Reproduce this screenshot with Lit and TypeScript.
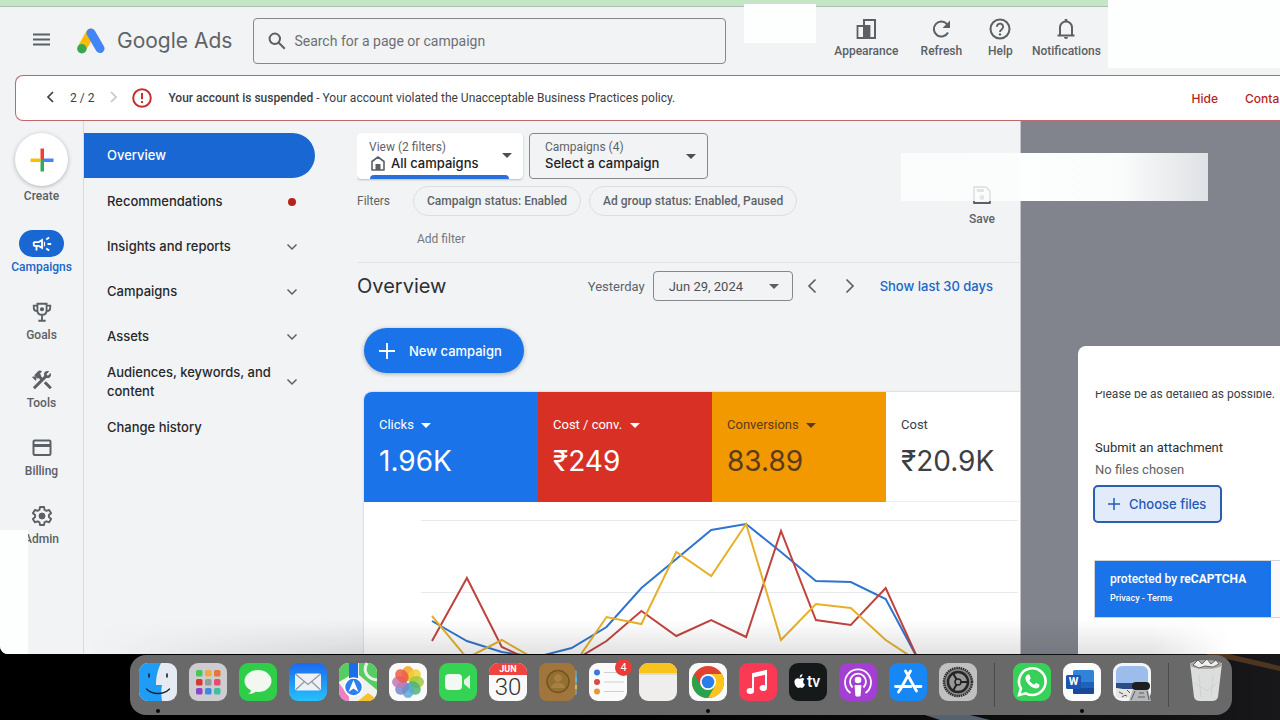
import { LitElement, html, css, svg, nothing } from "lit";
import type { TemplateResult } from "lit";
import { customElement, property } from "lit/decorators.js";
import { classMap } from "lit/directives/class-map.js";

const caret = html`<svg class="caret" viewBox="0 0 10 5" width="10" height="5" aria-hidden="true"><path d="M0 0h10L5 5z" fill="currentColor" /></svg>`;
const chevDown = html`<svg width="12" height="8" viewBox="0 0 12 8" fill="none" stroke="#5c6064" stroke-width="1.500"><path d="M1.500 1.500l4.500 4.500 4.500-4.500" /></svg>`;

const railIcons: Record<string, TemplateResult> = {
  Campaigns: html`<svg width="22" height="22" viewBox="0 0 24 24" fill="#fff"><path fill-rule="evenodd" d="M18 11v2h4v-2h-4zm-2 6.6c.96.71 2.21 1.65 3.2 2.4l1.2-1.6c-.99-.74-2.24-1.68-3.2-2.4l-1.2 1.6zM20.4 5.6L19.2 4c-.99.74-2.24 1.68-3.2 2.4l1.2 1.6c.96-.72 2.21-1.65 3.2-2.4zM4 9c-1.100 0-2 .9-2 2v2c0 1.100.9 2 2 2h1v4h2v-4h1l5 3V6L8 9H4zm5.030 1.710L11 9.530v4.940l-1.970-1.180-.48-.29H4v-2h4.550l.48-.29zM15.500 12c0-1.330-.58-2.530-1.500-3.350v6.690c.92-.81 1.500-2.010 1.500-3.340z" /></svg>`,
  Goals: html`<svg width="22" height="22" viewBox="0 0 24 24" fill="none" stroke="#5c6064" stroke-width="2"><path d="M7 3h10v7c0 3-2 5-5 5s-5-2-5-5zM7 5H3v2c0 2.500 1.500 4 4 4M17 5h4v2c0 2.500-1.500 4-4 4M12 15v6M8 21.500h8" /><circle cx="12" cy="9" r="1.300" fill="#5c6064" /></svg>`,
  Tools: html`<svg width="24" height="24" viewBox="0 0 24 24" fill="#5c6064"><path d="M13.780 15.300l6 6 2.110-2.160-6-6-2.110 2.160zm3.720-5.200c-.39 0-.81-.05-1.140-.19L4.970 21.250l-2.110-2.110 7.410-7.400L8.500 9.960l-.72.70-1.450-1.410v2.860l-.70.70-3.520-3.560.70-.70h2.810l-1.400-1.410 3.560-3.560a2.976 2.976 0 014.220 0L9.890 5.740l1.410 1.400-.71.71 1.790 1.780 1.820-1.880c-.14-.33-.2-.75-.2-1.120a3.490 3.490 0 013.500-3.520c.59 0 1.110.14 1.580.42L16.410 6.200l1.500 1.500 2.670-2.670c.28.47.42.97.42 1.600 0 1.920-1.550 3.470-3.500 3.470z" /></svg>`,
  Billing: html`<svg width="22" height="20" viewBox="0 0 22 20" fill="none" stroke="#5c6064" stroke-width="2"><rect x="2.500" y="2.500" width="17" height="14.500" rx="1.200" /><path d="M2 7.500h18" stroke-width="3" /></svg>`,
  Admin: html`<svg width="24" height="24" viewBox="0 0 24 24" fill="none" stroke="#5c6064" stroke-width="1.900"><path stroke-linejoin="round" d="M10 3h4l.5 2.800 1.900 1.100 2.700-1 2 3.400-2.200 1.800v2l2.200 1.800-2 3.400-2.700-1-1.900 1.100L14 21h-4l-.5-2.600-1.900-1.100-2.700 1-2-3.400 2.200-1.800v-2L2.900 9.300l2-3.400 2.700 1 1.900-1.100z" /><circle cx="12" cy="12" r="3" fill="#5c6064" stroke-width="1" /></svg>`,
};

const navItems = [
  { label: "Overview", active: true },
  { label: "Recommendations", dot: true },
  { label: "Insights and reports", expand: true },
  { label: "Campaigns", expand: true },
  { label: "Assets", expand: true },
  { label: "Audiences, keywords, and content", expand: true },
  { label: "Change history" },
];

const actions = [
  { label: "Appearance", wide: 80, icon: svg`<path d="M9 8V2h11v18H9" fill="none" stroke="#5c6064" stroke-width="2"/><path d="M2.500 8h12v12h-12z" fill="none" stroke="#5c6064" stroke-width="1.800"/><path d="M8 8h6.500v12H8z" fill="#5c6064"/>` },
  { label: "Refresh", wide: 70, icon: svg`<path d="M18 14.500A7.500 7.500 0 1 1 17.300 6.500" fill="none" stroke="#5c6064" stroke-width="2"/><path d="M20 2.500v7.500h-7.500z" fill="#5c6064"/>` },
  { label: "Help", wide: 48, icon: svg`<circle cx="11" cy="11" r="9.500" fill="none" stroke="#5c6064" stroke-width="2"/><path d="M7.900 8.800a3.100 3.100 0 1 1 5 2.400c-1.200.9-1.900 1.300-1.900 2.800" fill="none" stroke="#5c6064" stroke-width="1.900"/><circle cx="11" cy="16.400" r="1.200" fill="#5c6064"/>` },
  { label: "Notifications", wide: 84, icon: svg`<path d="M5 17V9.500a6 6 0 0 1 12 0V17M2.500 17.500h17" fill="none" stroke="#5c6064" stroke-width="2"/><path d="M9 19h4a2 2 0 0 1-4 0zM9.700 1h2.600v3H9.700z" fill="#5c6064"/>` },
];

const metrics = [
  { label: "Clicks", value: "1.96K", tone: "blue", pick: true },
  { label: "Cost / conv.", value: "₹249", tone: "red", pick: true },
  { label: "Conversions", value: "83.89", tone: "amber", pick: true },
  { label: "Cost", value: "₹20.9K", tone: "plain", pick: false },
];

const X0 = 68;
const STEP = 34.9;
const series = [
  { color: "#2f74cf", ys: [119, 139, 150, 155, 146, 125, 86, 57, 28, 22, 50, 79, 80, 97, 162] },
  { color: "#c0433d", ys: [139, 76, 145, 161, 160, 139, 109, 134, 118, 135, 29, 118, 123, 86, 163] },
  { color: "#e6b02a", ys: [114, 156, 138, 158, 166, 115, 122, 50, 74, 22, 138, 102, 106, 138, 161] },
];

@customElement("perf-chart")
class PerfChart extends LitElement {
  static styles = css`
    :host { display: block; background: #fff; }
    .plot { display: block; width: 100%; height: 152px; }
    .grid { stroke: #e8eaed; }
    .line { fill: none; stroke-width: 2; vector-effect: non-scaling-stroke; }
  `;
  render() {
    return html`<svg class="plot" viewBox="0 0 656 152" preserveAspectRatio="none" role="img" aria-label="Performance over time">
      <path class="grid" d="M57 18.500H654M57 90.500H654" />
      ${series.map((s) => svg`<polyline class="line" stroke=${s.color} points=${s.ys.map((y, i) => `${(X0 + i * STEP).toFixed(1)},${y}`).join(" ")} />`)}
    </svg>`;
  }
}

const petals = ["#f5a623", "#f0d030", "#9fca3c", "#4fb56c", "#5aa9d6", "#7a86c8", "#c07ab4", "#ee5a44"];
const pads = ["#49c552", "#f2a93b", "#e8743b", "#d8362f", "#8f9f95", "#e34f6f", "#8e44c9", "#3a8be0", "#3fbf9f"];

const tile = (fill: string) => svg`<rect width="38" height="38" rx="9" fill=${fill} />`;

const dockIcons: Record<string, unknown> = {
  Finder: svg`${tile("#e6eaf2")}<path d="M9 0h13c-3 6-5 13-5 22h6c-1 5-1 10 0 16H9a9 9 0 0 1-9-9V9a9 9 0 0 1 9-9z" fill="#1f9cf5"/><path d="M10 11v3M28 11v3" stroke="#123" stroke-width="1.600" stroke-linecap="round"/><path d="M7.500 26c6 6 17 6 23 0" fill="none" stroke="#123" stroke-width="1.300" stroke-linecap="round"/>`,
  Launchpad: svg`${tile("#cdcdd1")}${pads.map((c, i) => svg`<rect x=${7 + (i % 3) * 9} y=${7 + Math.floor(i / 3) * 9} width="6.500" height="6.500" rx="1.600" fill=${c} />`)}`,
  Messages: svg`${tile("#2fce48")}<ellipse cx="19" cy="18" rx="13.500" ry="11" fill="#f2f7f0"/><path d="M12 26c0 3-1 4-3 5 4 0 7-1 8-3z" fill="#f2f7f0"/>`,
  Mail: svg`<defs><linearGradient id="m" x2="0" y2="1"><stop stop-color="#1b6af0"/><stop offset="1" stop-color="#27c1fb"/></linearGradient></defs>${tile("url(#m)")}<rect x="6" y="10.500" width="26" height="17" rx="2" fill="#eef1f4"/><path d="M7 11.500l12 10 12-10M7 26.500l8.500-8M31 26.500l-8.500-8" fill="none" stroke="#8e98a3" stroke-width="1.200"/>`,
  Maps: svg`${tile("#f1f2f0")}<path d="M0 9a9 9 0 0 1 9-9h1v13L0 19zM20 0h9a9 9 0 0 1 9 9v18L20 12z" fill="#58cb62"/><path d="M28 0c-5 9 1 16 10 17" fill="none" stroke="#e7f2e6" stroke-width="3"/><path d="M0 20l10 14v4H9a9 9 0 0 1-9-9z" fill="#ee7fc0"/><path d="M19 38l10-8 7 5-5 3z" fill="#f6c12c"/><path d="M10 0h9v16h-9z" fill="#1c6ee8"/><circle cx="14.500" cy="24" r="9" fill="#2d7ff0" stroke="#fff" stroke-width="1.500"/><path d="M14.500 17l5 12-5-3.500-5 3.500z" fill="#fff"/>`,
  Photos: svg`${tile("#fafafa")}${petals.map((c, i) => svg`<ellipse cx="19" cy="10.500" rx="6" ry="7.500" fill=${c} opacity=".85" transform=${`rotate(${i * 45} 19 19)`} />`)}`,
  FaceTime: svg`${tile("#35d353")}<rect x="6" y="11" width="17" height="16" rx="4" fill="#f4f8f2"/><path d="M25 17l6-5v14l-6-5z" fill="#e4f2e2"/>`,
  Contacts: svg`<rect x="30" y="7" width="8" height="25" rx="2" fill="#6f9aa3"/><path d="M36 14h2v5h-2z" fill="#57b6e6"/><path d="M36 22h2v4h-2z" fill="#e5b637"/><rect width="36" height="38" rx="8" fill="#a0763c"/><circle cx="19" cy="18.500" r="11" fill="#94702f" stroke="#755324" stroke-width="1.500"/><circle cx="19" cy="15" r="3.800" fill="#a87f45"/><path d="M12 25c1-7 13-7 14 0z" fill="#a87f45"/>`,
  Reminders: svg`${tile("#fafafa")}<path d="M15 9.500h16M15 19h20M15 28.500h20" stroke="#ced0d3"/><circle cx="8" cy="9.500" r="3" fill="#3779dc"/><circle cx="8" cy="19" r="3" fill="#d94a45"/><circle cx="8" cy="28.500" r="3" fill="#ea9636"/>`,
  Notes: svg`${tile("#efeeec")}<path d="M0 10V9a9 9 0 0 1 9-9h20a9 9 0 0 1 9 9v1z" fill="#f8c31c"/><path d="M0 11h38" stroke="#c9c5b8"/>`,
  Chrome: svg`${tile("#fafafa")}<circle cx="19" cy="19" r="16" fill="#e04131"/><path d="M5.140 11A16 16 0 0 0 19 35l7-12-14 0z" fill="#2ba24c"/><path d="M19 35A16 16 0 0 0 32.860 11H19l7 12z" fill="#fbc51d"/><circle cx="19" cy="19" r="8" fill="#fff"/><circle cx="19" cy="19" r="6.300" fill="#2b7de9"/>`,
  Music: svg`${tile("#fa3a55")}<path d="M14 27V11l13-3v16" fill="none" stroke="#fff" stroke-width="2"/><path d="M14 10.500l13-3v4l-13 3z" fill="#fff"/><ellipse cx="11.300" cy="28" rx="3.700" ry="3" fill="#fff"/><ellipse cx="24.300" cy="25" rx="3.700" ry="3" fill="#fff"/>`,
  TV: svg`${tile("#15191a")}<path d="M11.500 15.500c1.500-1 3-.6 4 .4-2 1.400-1.600 4.600.5 5.400-.7 2-2 4-3.400 3.600-1-.4-1.500-.4-2.600 0C7.700 25.500 5 21 5.500 18c.4-2.400 2.800-3.500 4.500-2.500.6.300.9.300 1.500 0zM10.700 14.500c0-2 1-3.200 2.800-3.500 0 2-1 3.300-2.800 3.500z" fill="#fff"/>`,
  Podcasts: svg`${tile("#a43fd3")}<g fill="none" stroke="#fff" stroke-width="1.800"><path d="M11.500 30a13 13 0 1 1 15 0"/><path d="M13.500 24.500a8 8 0 1 1 11 0"/></g><circle cx="19" cy="17" r="3.300" fill="#fff"/><path d="M16 22.500h6l-1 10.500h-4z" fill="#fff" stroke="#fff" stroke-linejoin="round"/>`,
  "App Store": svg`${tile("#1787f5")}<path d="M21.500 8L11 27M16.500 8l11 20M6.500 23.500H22M27 23.500h5M9.500 29l1.200-2" fill="none" stroke="#fff" stroke-width="2.800" stroke-linecap="round"/>`,
  Settings: svg`${tile("#c0c0c0")}<circle cx="19" cy="19" r="14" fill="#8b8b8b" stroke="#2d2d2d" stroke-width="2.500" stroke-dasharray="1.500 .7"/><circle cx="19" cy="19" r="10" fill="#999" stroke="#262626" stroke-width="2.500"/><path d="M19 19h10M19 19l-5-8.700M19 19l-5 8.700" stroke="#222" stroke-width="2"/><circle cx="19" cy="19" r="3" fill="#999" stroke="#222" stroke-width="1.500"/>`,
  WhatsApp: svg`${tile("#37d058")}<path d="M6 32l1.900-6.500a13.300 13.300 0 1 1 5 4.800z" fill="none" stroke="#fff" stroke-width="2.600"/><path d="M14 12c1-1 2-1 2.500 0l1.200 3c.2.700-1.300 2-1.300 2.300 1 2 2.500 3.500 4.600 4.400.5 0 1.700-1.700 2.300-1.600l3 1.500c.5.400 0 2.800-1.300 3.400-5 2.500-13.500-6-12.500-10.700.2-1 .8-1.800 1.500-2.300z" fill="#fff"/>`,
  Word: svg`${tile("#fcfcfd")}<rect x="10" y="7" width="21" height="24" rx="1.500" fill="#2f84d8"/><path d="M10 19h21v6H10z" fill="#1f62bd"/><path d="M10 25h21v4.500a1.500 1.500 0 0 1-1.500 1.500h-18a1.500 1.500 0 0 1-1.500-1.500z" fill="#174a9c"/><rect x="3" y="12" width="15" height="14" rx="1.500" fill="#1d54b0"/>`,
  Preview: svg`${tile("#f3f4f6")}<path d="M3 9a6 6 0 0 1 6-6h20a6 6 0 0 1 6 6v13H3z" fill="#9cbcec"/><path d="M3 20h32v5L24 28 3 25z" fill="#2d4c83"/><path d="M3 26h32v9H6a3 3 0 0 1-3-3z" fill="#e7e6e0"/><path d="M6 29l4 2M9 34q3-3 5-1M14 27l3 3" stroke="#555" fill="none"/><path d="M20 26h15l3 12H16z" fill="#b4b8b9"/><path d="M22 28l-4 9M34 28l2 9M26 30h5M25 34h7" stroke="#5b5f60" fill="none"/><rect x="19" y="19" width="18" height="8" rx="4" fill="#1c1e20"/>`,
  Trash: svg`<path d="M3 0h32l-4 34q-1 4-6 4H13q-5 0-6-4z" fill="#dcdddd"/><ellipse cx="19" cy="1.500" rx="16" ry="4.500" fill="#a8a8a6"/><path d="M6 2l5-5 4 4 5-5 4 5 5-4 3 4-6 3-8-1-6 2z" fill="#efefee" stroke="#4c4a48" stroke-width=".8"/><path d="M12 12l2 22M26 12l-2 22M8 20l12 8 10-8" stroke="#d0d1d1" fill="none"/>`,
};

const dockApps = ["Finder", "Launchpad", "Messages", "Mail", "Maps", "Photos", "FaceTime", "Calendar", "Contacts", "Reminders", "Notes", "Chrome", "Music", "TV", "Podcasts", "App Store", "Settings", "|", "WhatsApp", "Word", "Preview", "|", "Trash"];
const running = new Set(["Finder", "Chrome", "Word"]);

@customElement("dock-app")
class DockApp extends LitElement {
  @property() name = "";
  static styles = css`
    :host { display: block; width: 50px; }
    .app { position: relative; display: flex; justify-content: center; width: 100%; height: 60px; padding: 8px 0 0; border: 0; background: none; font-family: Roboto, sans-serif; }
    .art { display: block; width: 38px; height: 38px; overflow: visible; }
    .run { position: absolute; left: 23px; bottom: 2px; width: 4px; height: 4px; border-radius: 2px; background: #060606; }
    .cal { width: 38px; height: 38px; border-radius: 9px; overflow: hidden; background: #fafafa; color: #333; text-align: center; }
    .month { display: block; height: 12px; line-height: 13px; font-size: 9px; font-weight: 700; background: #ee4440; color: #fff; }
    .day { display: block; font-size: 24px; line-height: 25px; font-weight: 300; }
    .badge { position: absolute; right: 1px; top: 4px; width: 17px; height: 17px; border-radius: 9px; background: #ec3a35; color: #fff; font-size: 11px; line-height: 17px; }
    .over { position: absolute; color: #fff; }
    .tv { left: 24px; top: 17px; font-size: 16px; line-height: 20px; font-weight: 500; }
    .w { left: 9px; top: 20px; width: 15px; font-size: 11px; line-height: 14px; font-weight: 700; }
  `;
  render() {
    const n = this.name;
    return html`<button class="app" aria-label=${n}>
      ${n === "Calendar"
        ? html`<span class="cal"><span class="month">JUN</span><span class="day">30</span></span>`
        : html`<svg class="art" viewBox="0 0 38 38" aria-hidden="true">${dockIcons[n]}</svg>`}
      ${n === "TV" ? html`<span class="over tv">tv</span>` : nothing}
      ${n === "Word" ? html`<span class="over w">W</span>` : nothing}
      ${n === "Reminders" ? html`<span class="badge">4</span>` : nothing}
      ${running.has(n) ? html`<span class="run"></span>` : nothing}
    </button>`;
  }
}

@customElement("app-root")
class AppRoot extends LitElement {
  static styles = css`
    :host { display: flex; flex-direction: column; height: 100vh; overflow: hidden; background: #030303; color: #3c4043; font-family: Roboto, sans-serif; font-size: 12px; --head: Inter, sans-serif; }
    * { box-sizing: border-box; }
    button, select, input { font: inherit; color: inherit; margin: 0; }
    button { border: 0; background: none; padding: 0; white-space: nowrap; }
    select { appearance: none; border: 0; background: none; padding: 0; outline: 0; }
    a { text-decoration: none; color: inherit; }
    svg { flex: none; }

    .window { position: relative; flex: 1; min-height: 0; display: flex; flex-direction: column; overflow: hidden; border-bottom-left-radius: 8px; background: #f1f3f4; }
    .tabs { flex: none; height: 7px; background: #c3e6c4; border-bottom: 1px solid #b4bcb6; }
    .mask { position: absolute; background: #fdfefe; }
    .mask-tab { left: 744px; top: 4px; width: 72px; height: 39px; }
    .mask-user { left: 1108px; right: 0; top: 0; height: 68px; }
    .mask-side { left: 0; top: 530px; width: 28px; bottom: 0; }
    .mask-band { left: 901px; top: 153px; width: 307px; height: 48px; background: linear-gradient(90deg, rgba(253, 254, 254, .8), rgba(253, 254, 254, .85) 38%, #fdfefe 39%, #fafbfb 72%, #dfe2e4); }
    .shade { position: absolute; left: 0; right: 0; bottom: 0; height: 34px; pointer-events: none; background: linear-gradient(transparent, rgba(60, 60, 66, .15)); mask-image: linear-gradient(90deg, transparent 7%, #000 28%, #000 90%, transparent 96%); }

    .header { flex: none; display: flex; align-items: center; height: 68px; padding-left: 33px; }
    .brand { display: flex; align-items: center; gap: 12px; margin-left: 27px; color: #5f6368; font-family: var(--head); font-size: 21px; line-height: 28px; }
    .search { display: flex; align-items: center; gap: 8px; width: 473px; height: 46px; margin-left: 21px; padding: 0 14px; border: 1px solid #85898d; border-radius: 4px; font-size: 14px; }
    .search input { flex: 1; border: 0; background: none; outline: 0; padding: 0; }
    .search input::placeholder { color: #6c7074; opacity: 1; }
    .actions { display: flex; margin-left: 100px; }
    .action { display: flex; flex-direction: column; align-items: center; gap: 3px; padding-bottom: 5px; line-height: 16px; font-weight: 500; color: #5c6064; }

    .banner { flex: none; display: flex; align-items: center; height: 46px; margin-left: 15px; padding-left: 30px; border: 1px solid #c0676a; border-right: 0; border-radius: 8px 0 0 8px; background: #fff; white-space: nowrap; overflow: hidden; }
    .banner p { margin: 0 0 0 16px; flex: 1; }
    .banner b { font-weight: 500; }
    .pager { margin: 0 16px; }
    .warn { margin-left: 14px; }
    .danger { color: #b3261e; font-family: var(--head); font-weight: 500; }
    .danger + .danger { width: 35px; margin-left: 27px; }

    .body { flex: 1; min-height: 0; display: grid; grid-template-columns: 84px 273px minmax(0, 1fr) 260px; }
    .rail { display: flex; flex-direction: column; align-items: center; gap: 23px; padding-top: 12px; border-right: 1px solid #d8dade; }
    .tool { display: flex; flex-direction: column; align-items: center; gap: 2px; line-height: 16px; font-weight: 500; color: #5c6064; }
    .glyph { display: flex; align-items: center; justify-content: center; width: 45px; height: 27px; border-radius: 14px; }
    .tool.on { color: #1a66c9; }
    .tool.on .glyph { background: #1967d2; }
    .fab { display: flex; align-items: center; justify-content: center; width: 53px; height: 53px; border-radius: 27px; background: #fff; box-shadow: 0 1px 4px rgba(60, 64, 67, .35); }
    .create { margin-bottom: 3px; }

    .nav { display: flex; flex-direction: column; padding: 12px 42px 0 0; font-family: var(--head); font-size: 13px; line-height: 19px; font-weight: 500; color: #26282b; }
    .nav a { display: flex; align-items: center; justify-content: space-between; min-height: 45px; padding: 4px 17px 4px 23px; }
    .nav span { flex: 1; }
    .nav .on { margin-bottom: 1px; background: #1967d2; color: #fff; border-radius: 0 23px 23px 0; }
    .dot { width: 8px; height: 8px; border-radius: 4px; background: #b9201c; margin-right: 2px; }

    .main { min-width: 0; padding-top: 12px; overflow: hidden; }
    .scopes { display: flex; gap: 6px; }
    .scope { position: relative; display: flex; flex-direction: column; justify-content: center; height: 46px; padding: 0 12px 2px; border-radius: 4px; color: #5f6368; line-height: 16px; }
    .scope select { font-family: var(--head); font-size: 13px; font-weight: 500; color: #202124; width: 100%; height: 17px; padding-right: 24px; }
    .scope .caret { position: absolute; right: 11px; top: 20px; color: #4c5054; }
    .scope.view { width: 166px; background: #fff; box-shadow: 0 1px 2px rgba(60, 64, 67, .3); }
    .scope.view::after { content: ""; position: absolute; left: 13px; right: 14px; bottom: 0; height: 4px; border-radius: 4px 4px 0 0; background: #2a6fdb; }
    .scope.camp { width: 179px; padding: 0 15px 2px; border: 1px solid #85898d; }
    .home { display: flex; align-items: center; gap: 6px; padding-left: 2px; }

    .filters { display: flex; padding: 7px 0 15px; border-bottom: 1px solid #e1e3e6; color: #5f6368; }
    .filters > h2 { margin: 0; width: 56px; font-size: 12px; font-weight: 400; line-height: 30px; }
    .chips { flex: 1; display: flex; flex-wrap: wrap; align-content: flex-start; gap: 8px; }
    .chip { height: 30px; padding: 0 13px; border: 1px solid #dcdee1; border-radius: 15px; font-weight: 500; }
    .add { display: block; width: 100%; padding: 7px 0 0 4px; text-align: left; line-height: 16px; color: #74787c; }
    .save { display: flex; flex-direction: column; align-items: center; gap: 7px; width: 76px; padding-bottom: 20px; line-height: 16px; font-weight: 500; }

    .range { display: flex; align-items: center; height: 46px; padding-right: 27px; font-size: 13px; color: #5f6368; }
    .range h1 { flex: 1; margin: 0; font-family: var(--head); font-size: 20px; font-weight: 400; color: #2d3033; }
    .date { position: relative; width: 140px; height: 30px; margin: 0 0 0 8px; }
    .date select { width: 100%; height: 100%; padding-left: 15px; border: 1px solid #85898d; border-radius: 4px; color: #4c5054; }
    .date .caret { position: absolute; right: 14px; top: 13px; color: #5c6064; }
    .step { display: flex; align-items: center; justify-content: center; width: 38px; height: 38px; }
    .range a { margin-left: 11px; font-family: var(--head); font-weight: 500; color: #1a66c9; white-space: nowrap; }

    .content { padding: 19px 0 0 7px; }
    .new { display: flex; align-items: center; gap: 14px; height: 45px; padding: 0 22px 0 15px; margin-bottom: 19px; border-radius: 23px; background: #1a73e8; color: #fff; font-family: var(--head); font-size: 13px; font-weight: 500; box-shadow: 0 1px 4px rgba(60, 64, 67, .4); }
    .card { border-radius: 8px 0 0 0; overflow: hidden; background: #fff; box-shadow: 0 0 2px rgba(60, 64, 67, .35); }
    .metrics { display: grid; grid-template-columns: repeat(3, 174px) minmax(0, 1fr); }
    .metric { height: 110px; padding: 23px 15px 0; font-size: 13px; line-height: 20px; white-space: nowrap; }
    .metric .pick { display: flex; align-items: center; gap: 7px; height: 20px; }
    .metric strong { display: block; margin-top: 7px; font-family: var(--head); font-size: 28px; line-height: 38px; font-weight: 400; }
    .blue { background: #1a73e8; color: #fff; }
    .red { background: #d93025; color: #fff; }
    .amber { background: #f29900; color: #5a3b1d; }
    .plain { color: #3c4043; border-bottom: 1px solid #eceef0; }

    .scrim { min-width: 0; padding: 225px 0 0 57px; border-left: 1px solid #c4c6cb; background: #81848c; }
    .form { height: 100%; padding: 40px 0 0 17px; border-radius: 8px 0 0 0; background: #fff; overflow: hidden; white-space: nowrap; }
    .hint { position: relative; margin: 0 0 35px; line-height: 16px; }
    .hint::before { content: ""; position: absolute; left: 0; right: 0; top: 0; height: 5px; background: #fff; }
    .form h3 { margin: 0; font-size: 13px; line-height: 22px; font-weight: 400; color: #2d3033; }
    .form .none { margin: 0 0 4px; font-size: 13px; line-height: 22px; color: #5f6368; }
    .choose { display: flex; align-items: center; gap: 9px; height: 38px; margin-left: -2px; padding: 0 14px 0 13px; border: 2px solid #2a5fb0; border-radius: 5px; background: #e2ebfa; color: #2459b5; font-family: var(--head); font-size: 13px; font-weight: 500; }
    .captcha { height: 58px; margin: 37px 0 0 -1px; border: 1px solid #d3d3d3; border-right: 0; background: #f9f9f9; }
    .captcha div { width: 176px; height: 100%; padding: 9px 15px; background: #1a73e8; color: #fff; font-weight: 500; line-height: 19px; }
    .captcha small { display: block; font-size: 9px; }
    .captcha b { font-weight: 700; }

    .desk { position: relative; flex: none; height: 66px; padding: 1px 0 0 130px; background: linear-gradient(90deg, #000 40%, #111113 90%, #18181a); }
    .wall { position: absolute; left: 0; top: 0; width: 100%; height: 100%; }
    .dock { position: relative; display: flex; width: max-content; height: 60px; padding: 0 1px 0 3px; border-radius: 16px; background: #69696a; }
    .sep { width: 1px; height: 44px; margin: 8px 12px 0 11px; background: #4b4b4c; }
  `;

  render() {
    return html`
      <div class="window">
        <div class="tabs"></div>
        <header class="header">
          <button aria-label="Main menu"><svg width="17" height="13" viewBox="0 0 17 13" stroke="#5c6064" stroke-width="1.800"><path d="M0 1.500h17M0 6.500h17M0 11.500h17" /></svg></button>
          <div class="brand">
            <svg width="28" height="26" viewBox="0 0 28 26" fill="none" stroke-linecap="round"><path d="M13.500 5L4.800 20.500" stroke="#fbbc04" stroke-width="9" /><path d="M14 5l9 15.500" stroke="#4285f4" stroke-width="9" /><circle cx="4.900" cy="20.800" r="4.700" fill="#34a853" /></svg>
            <span>Google Ads</span>
          </div>
          <label class="search">
            <svg width="18" height="18" viewBox="0 0 18 18" fill="none" stroke="#5c6064" stroke-width="2"><circle cx="6.800" cy="6.800" r="5.200" /><path d="M10.500 10.500l6.300 6.300" /></svg>
            <input type="text" aria-label="Search" placeholder="Search for a page or campaign" />
          </label>
          <nav class="actions">
            ${actions.map((a) => html`<button class="action" style="width:${a.wide}px"><svg width="22" height="22" viewBox="0 0 22 22">${a.icon}</svg>${a.label}</button>`)}
          </nav>
        </header>

        <section class="banner">
          <button aria-label="Previous"><svg width="8" height="12" viewBox="0 0 8 12" fill="none" stroke="#3c4043" stroke-width="1.700"><path d="M7 1L2 6l5 5" /></svg></button>
          <span class="pager">2 / 2</span>
          <button aria-label="Next"><svg width="8" height="12" viewBox="0 0 8 12" fill="none" stroke="#c4c7ca" stroke-width="1.700"><path d="M1 1l5 5-5 5" /></svg></button>
          <svg class="warn" width="20" height="20" viewBox="0 0 20 20" fill="none" stroke="#c5302b" stroke-width="2"><circle cx="10" cy="10" r="8.800" /><path d="M10 5v6.200M10 13v2" /></svg>
          <p><b>Your account is suspended</b> - Your account violated the Unacceptable Business Practices policy.</p>
          <button class="danger">Hide</button>
          <a class="danger" href="#">Conta</a>
        </section>

        <div class="body">
          <nav class="rail">
            <button class="tool create">
              <span class="fab"><svg width="24" height="24" viewBox="0 0 24 24"><path d="M10.500 0.500h3.500v12h-3.500z" fill="#ea4335" /><path d="M10.500 12h3.500v11.500h-3.500z" fill="#34a853" /><path d="M.5 10.500h10v3.500H.5z" fill="#fbbc04" /><path d="M14 10.500h9.500v3.500H12z" fill="#4285f4" /></svg></span>Create
            </button>
            ${Object.keys(railIcons).map((k) => html`<button class=${classMap({ tool: true, on: k === "Campaigns" })}><span class="glyph">${railIcons[k]}</span>${k}</button>`)}
          </nav>

          <nav class="nav">
            ${navItems.map((n) => html`<a href="#" class=${classMap({ on: !!n.active })}><span>${n.label}</span>${n.dot ? html`<i class="dot"></i>` : nothing}${n.expand ? chevDown : nothing}</a>`)}
          </nav>

          <main class="main">
            <div class="scopes">
              <div class="scope view">
                <label for="view">View (2 filters)</label>
                <div class="home">
                  <svg width="14" height="15" viewBox="0 0 14 15" fill="none" stroke="#5c6064" stroke-width="1.600"><path d="M1 5.500L7 1l6 4.500V14H1z" stroke-linejoin="round" /><path d="M4.500 8h5v6h-5z" fill="#5c6064" stroke="none" /></svg>
                  <select id="view"><option>All campaigns</option></select>
                </div>
                ${caret}
              </div>
              <div class="scope camp">
                <label for="camp">Campaigns (4)</label>
                <select id="camp"><option>Select a campaign</option></select>
                ${caret}
              </div>
            </div>
            <div class="filters">
              <h2>Filters</h2>
              <div class="chips">
                <button class="chip">Campaign status: Enabled</button>
                <button class="chip">Ad group status: Enabled, Paused</button>
                <button class="add">Add filter</button>
              </div>
              <button class="save"><svg width="18" height="18" viewBox="0 0 18 18" fill="none" stroke="#5c6064" stroke-width="1.800"><path d="M1 1h12l4 4v12H1z" stroke-linejoin="round" /><path d="M4 4.500h7" stroke-width="3" /><circle cx="9" cy="11.500" r="2.400" fill="#5c6064" stroke="none" /></svg>Save</button>
            </div>
            <div class="range">
              <h1>Overview</h1>
              <label for="date">Yesterday</label>
              <div class="date"><select id="date"><option>Jun 29, 2024</option></select>${caret}</div>
              <button class="step" aria-label="Previous day"><svg width="10" height="16" viewBox="0 0 10 16" fill="none" stroke="#5c6064" stroke-width="1.700"><path d="M8.500 1.500L2 8l6.500 6.500" /></svg></button>
              <button class="step" aria-label="Next day"><svg width="10" height="16" viewBox="0 0 10 16" fill="none" stroke="#5c6064" stroke-width="1.700"><path d="M1.500 1.500L8 8l-6.500 6.500" /></svg></button>
              <a href="#">Show last 30 days</a>
            </div>
            <div class="content">
              <button class="new"><svg width="16" height="16" viewBox="0 0 16 16" stroke="#fff" stroke-width="1.800"><path d="M8 0v16M0 8h16" /></svg>New campaign</button>
              <div class="card">
                <div class="metrics">
                  ${metrics.map((m) => html`<div class="metric ${m.tone}">
                    ${m.pick ? html`<div class="pick"><select aria-label="Metric"><option>${m.label}</option></select>${caret}</div>` : html`<div class="pick">${m.label}</div>`}
                    <strong>${m.value}</strong>
                  </div>`)}
                </div>
                <perf-chart></perf-chart>
              </div>
            </div>
          </main>

          <aside class="scrim">
            <div class="form">
              <p class="hint">Please be as detailed as possible.</p>
              <h3>Submit an attachment</h3>
              <p class="none">No files chosen</p>
              <button class="choose"><svg width="12" height="12" viewBox="0 0 12 12" stroke="#2459b5" stroke-width="1.500"><path d="M6 0v12M0 6h12" /></svg>Choose files</button>
              <div class="captcha"><div>protected by <b>reCAPTCHA</b><small><a href="#">Privacy</a> - <a href="#">Terms</a></small></div></div>
            </div>
          </aside>
        </div>

        <div class="mask mask-tab"></div>
        <div class="mask mask-user"></div>
        <div class="mask mask-side"></div>
        <div class="mask mask-band"></div>
        <div class="shade"></div>
      </div>

      <footer class="desk">
        <svg class="wall" viewBox="0 0 1280 66" preserveAspectRatio="none" aria-hidden="true"><path d="M1205 0h24l51 12v5z" fill="#4e3520" /><path d="M925 61h45l20 5h-50z" fill="#56616f" /></svg>
        <div class="dock">${dockApps.map((n) => (n === "|" ? html`<i class="sep"></i>` : html`<dock-app .name=${n}></dock-app>`))}</div>
      </footer>
    `;
  }
}
